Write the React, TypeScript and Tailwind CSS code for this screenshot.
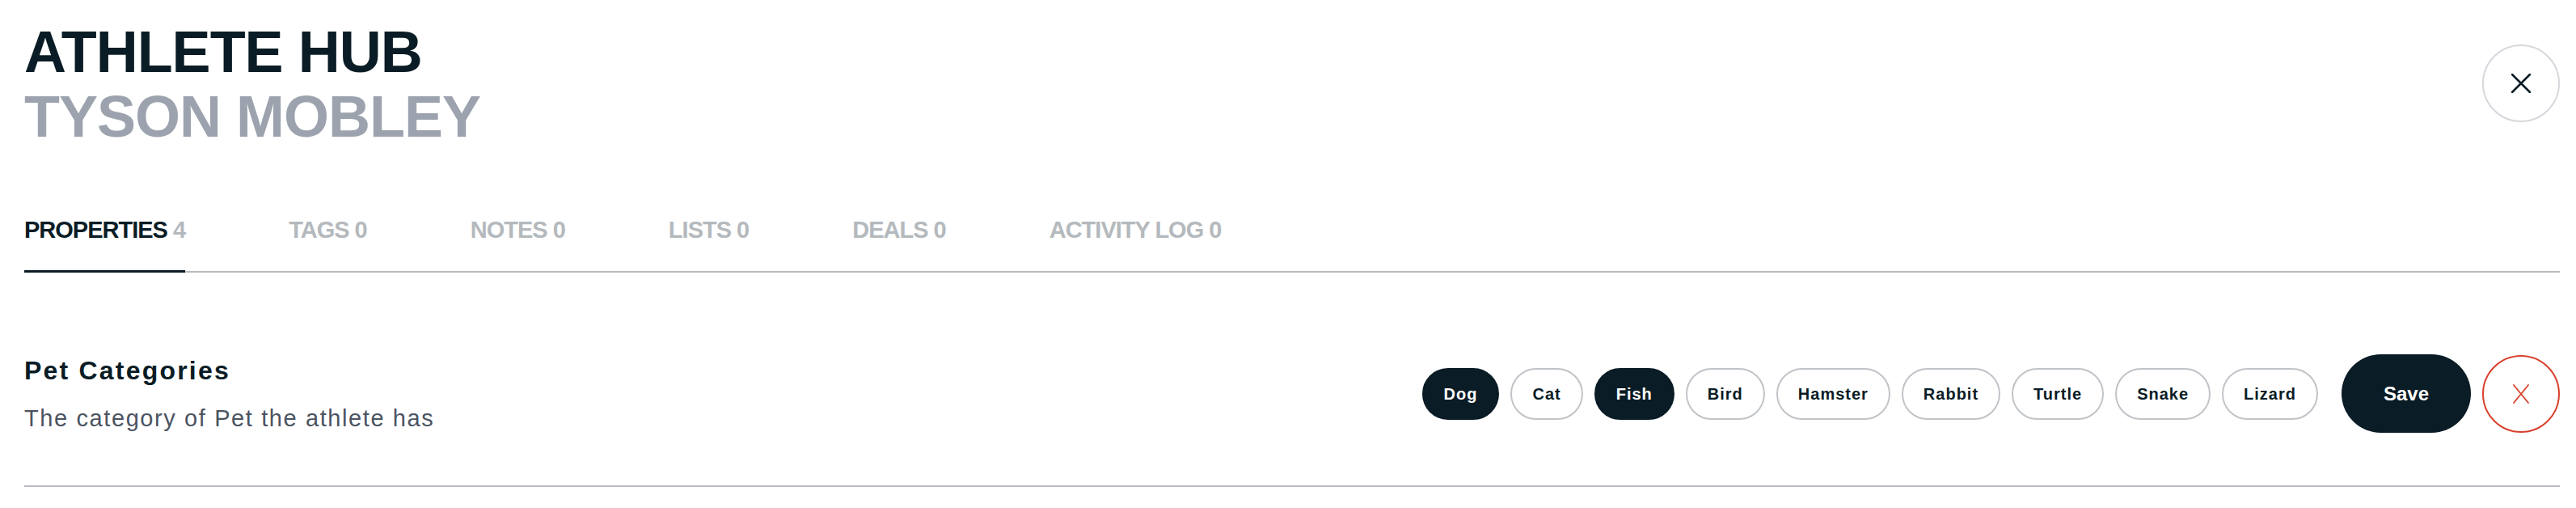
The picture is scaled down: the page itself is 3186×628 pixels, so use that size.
import { useState } from "react"

const tabs = [
  { label: "PROPERTIES", count: 4 },
  { label: "TAGS", count: 0 },
  { label: "NOTES", count: 0 },
  { label: "LISTS", count: 0 },
  { label: "DEALS", count: 0 },
  { label: "ACTIVITY LOG", count: 0 },
]

const pets = ["Dog", "Cat", "Fish", "Bird", "Hamster", "Rabbit", "Turtle", "Snake", "Lizard"]

function CloseIcon({ className, width = 24, height = 24, stroke = 2.5 }: { className?: string; width?: number; height?: number; stroke?: number }) {
  return (
    <svg width={width} height={height} viewBox={`0 0 ${width} ${height}`} className={className} fill="none">
      <path d={`M1 1L${width - 1} ${height - 1}M${width - 1} 1L1 ${height - 1}`} stroke="currentColor" strokeWidth={stroke} strokeLinecap="round" />
    </svg>
  )
}

export default function App() {
  const [active, setActive] = useState(0)
  const [selected, setSelected] = useState<string[]>(["Dog", "Fish"])

  const toggle = (pet: string) =>
    setSelected((s) => (s.includes(pet) ? s.filter((p) => p !== pet) : [...s, pet]))

  return (
    <div className="min-h-screen bg-white pl-[30px] pr-[20px] font-['Liberation_Sans',Arial,sans-serif] text-[#0a1c25]">
      {/* header */}
      <div className="flex items-start justify-between pt-[24px]">
        <h1 className="text-[72px] font-bold leading-[80px] tracking-[-1px]">
          <div>ATHLETE HUB</div>
          <div className="text-[#9da3ae]">TYSON MOBLEY</div>
        </h1>
        <button className="mt-[31px] flex h-[96px] w-[96px] items-center justify-center rounded-full border-2 border-[#d5d8dc] text-[#0a1c25]">
          <CloseIcon />
        </button>
      </div>

      {/* tabs */}
      <div className="mt-[82px] flex gap-[128px] border-b-2 border-[#b8bcc0]">
        {tabs.map((t, i) => (
          <button
            key={t.label}
            onClick={() => setActive(i)}
            className={
              "-mb-[2px] border-b-[3px] pb-[32px] text-[29px] font-bold leading-[36px] tracking-[-1px] " +
              (i === active ? "border-[#0a1c25] text-[#0a1c25]" : "border-transparent text-[#b4b9bd]")
            }
          >
            {t.label} <span className="text-[#b4b9bd]">{t.count}</span>
          </button>
        ))}
      </div>

      {/* property row */}
      <div className="flex items-center justify-between border-b-2 border-[#b8bcc0] pt-[101px] pb-[65px]">
        <div>
          <div className="text-[32px] font-bold leading-[40px] tracking-[2.2px]">Pet Categories</div>
          <div className="mt-[21px] text-[29px] leading-[36px] tracking-[1.6px] text-[#4b5462]">
            The category of Pet the athlete has
          </div>
        </div>
        <div className="flex items-center">
          <div className="flex items-center gap-[14px]">
            {pets.map((p) => {
              const on = selected.includes(p)
              return (
                <button
                  key={p}
                  onClick={() => toggle(p)}
                  className={
                    "flex h-[64px] items-center rounded-full border-2 px-[25px] text-[20px] font-bold tracking-[1px] " +
                    (on ? "border-[#0a1c25] bg-[#0a1c25] text-white" : "border-[#c0c4c8] bg-white text-[#0a1c25]")
                  }
                >
                  {p}
                </button>
              )
            })}
          </div>
          <button className="ml-[29px] h-[97px] w-[160px] rounded-full bg-[#0a1c25] text-[24px] font-bold text-white">
            Save
          </button>
          <button className="ml-[14px] flex h-[96px] w-[96px] items-center justify-center rounded-full border-2 border-[#d8402c] text-[#d8402c]">
            <CloseIcon width={20} height={24} stroke={1.8} />
          </button>
        </div>
      </div>
    </div>
  )
}
